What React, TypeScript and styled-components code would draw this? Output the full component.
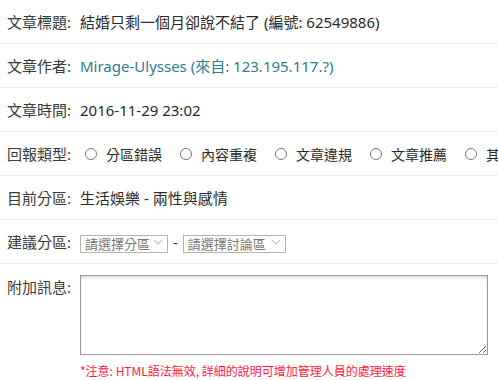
import styled, { createGlobalStyle } from "styled-components";

const GlobalStyle = createGlobalStyle`
  body {
    margin: 0;
    background: #fff;
    font-family: "Noto Sans", "Noto Sans CJK TC", sans-serif;
    overflow: hidden;
  }
`;

const Form = styled.div`
  width: 498px;
  overflow: hidden;
`;

const Row = styled.div<{ top?: boolean }>`
  display: flex;
  align-items: ${({ top }) => (top ? "flex-start" : "center")};
  height: ${({ top }) => (top ? "auto" : "43px")};
  padding-top: ${({ top }) => (top ? "11px" : "0")};
  border-bottom: ${({ top }) => (top ? "none" : "1px solid #ebebeb")};
  white-space: nowrap;
`;

const Label = styled.div<{ top?: boolean }>`
  flex: 0 0 73px;
  padding-left: 7px;
  font-size: 15px;
  line-height: 20px;
  color: #3a3a3a;
  margin-top: ${({ top }) => (top ? "2px" : "0")};
`;

const Value = styled.div<{ accent?: boolean }>`
  font-size: 15px;
  line-height: 20px;
  color: ${({ accent }) => (accent ? "#2d7d92" : "#2a2a2a")};
`;

const RadioGroup = styled.div`
  display: flex;
  gap: 18px;
  padding-left: 5px;
`;

const RadioOption = styled.label`
  display: flex;
  align-items: center;
  gap: 9px;
  font-family: "Noto Sans CJK TC", sans-serif;
  font-size: 14px;
  line-height: 20px;
  color: #2a2a2a;
`;

const Radio = styled.input`
  appearance: none;
  margin: 0;
  width: 12px;
  height: 12px;
  border: 1.5px solid #7a7a7a;
  border-radius: 50%;
  box-sizing: border-box;
`;

const Selects = styled.div`
  display: flex;
  align-items: center;
  gap: 5px;
  font-size: 15px;
  color: #333;
`;

const SelectBox = styled.div<{ w: number }>`
  position: relative;
  width: ${({ w }) => w}px;
  height: 18px;
`;

const Select = styled.select`
  appearance: none;
  width: 100%;
  height: 100%;
  margin: 0;
  padding: 0 0 0 4px;
  border: 1px solid #b4b4b4;
  border-radius: 0;
  background: #fff;
  font-family: "Noto Sans CJK TC", sans-serif;
  font-size: 13px;
  line-height: 16px;
  color: #777;
`;

const Chevron = styled.svg`
  position: absolute;
  right: 5px;
  top: 6px;
  pointer-events: none;
`;

const Area = styled.textarea`
  width: 408px;
  height: 80px;
  box-sizing: border-box;
  margin: 0;
  border: 1px solid #999;
  box-shadow: inset 0 2px 3px rgba(0, 0, 0, 0.12);
  font-family: inherit;
  font-size: 14px;
`;

const Note = styled.div`
  margin: 8px 0 0 80px;
  font-family: "Noto Sans CJK TC", sans-serif;
  font-size: 12px;
  line-height: 16px;
  color: #ff1a3c;
`;

const reportTypes = ["分區錯誤", "內容重複", "文章違規", "文章推薦", "其他"];

const Dropdown = ({ placeholder, w }: { placeholder: string; w: number }) => (
  <SelectBox w={w}>
    <Select defaultValue="">
      <option value="">{placeholder}</option>
    </Select>
    <Chevron width="10" height="6" viewBox="0 0 10 6">
      <path d="M1 1l4 4 4-4" fill="none" stroke="#c4c4c4" strokeWidth="1.2" />
    </Chevron>
  </SelectBox>
);

export default function App() {
  return (
    <Form>
      <GlobalStyle />
      <Row>
        <Label>文章標題:</Label>
        <Value>結婚只剩一個月卻說不結了 (編號: 62549886)</Value>
      </Row>
      <Row>
        <Label>文章作者:</Label>
        <Value accent>Mirage-Ulysses (來自: 123.195.117.?)</Value>
      </Row>
      <Row>
        <Label>文章時間:</Label>
        <Value>2016-11-29 23:02</Value>
      </Row>
      <Row>
        <Label>回報類型:</Label>
        <RadioGroup>
          {reportTypes.map((t) => (
            <RadioOption key={t}>
              <Radio type="radio" name="type" />
              {t}
            </RadioOption>
          ))}
        </RadioGroup>
      </Row>
      <Row>
        <Label>目前分區:</Label>
        <Value>生活娛樂 - 兩性與感情</Value>
      </Row>
      <Row>
        <Label>建議分區:</Label>
        <Selects>
          <Dropdown placeholder="請選擇分區" w={88} />
          -
          <Dropdown placeholder="請選擇討論區" w={103} />
        </Selects>
      </Row>
      <Row top>
        <Label top>附加訊息:</Label>
        <Area />
      </Row>
      <Note>*注意: HTML語法無效, 詳細的說明可增加管理人員的處理速度</Note>
    </Form>
  );
}
